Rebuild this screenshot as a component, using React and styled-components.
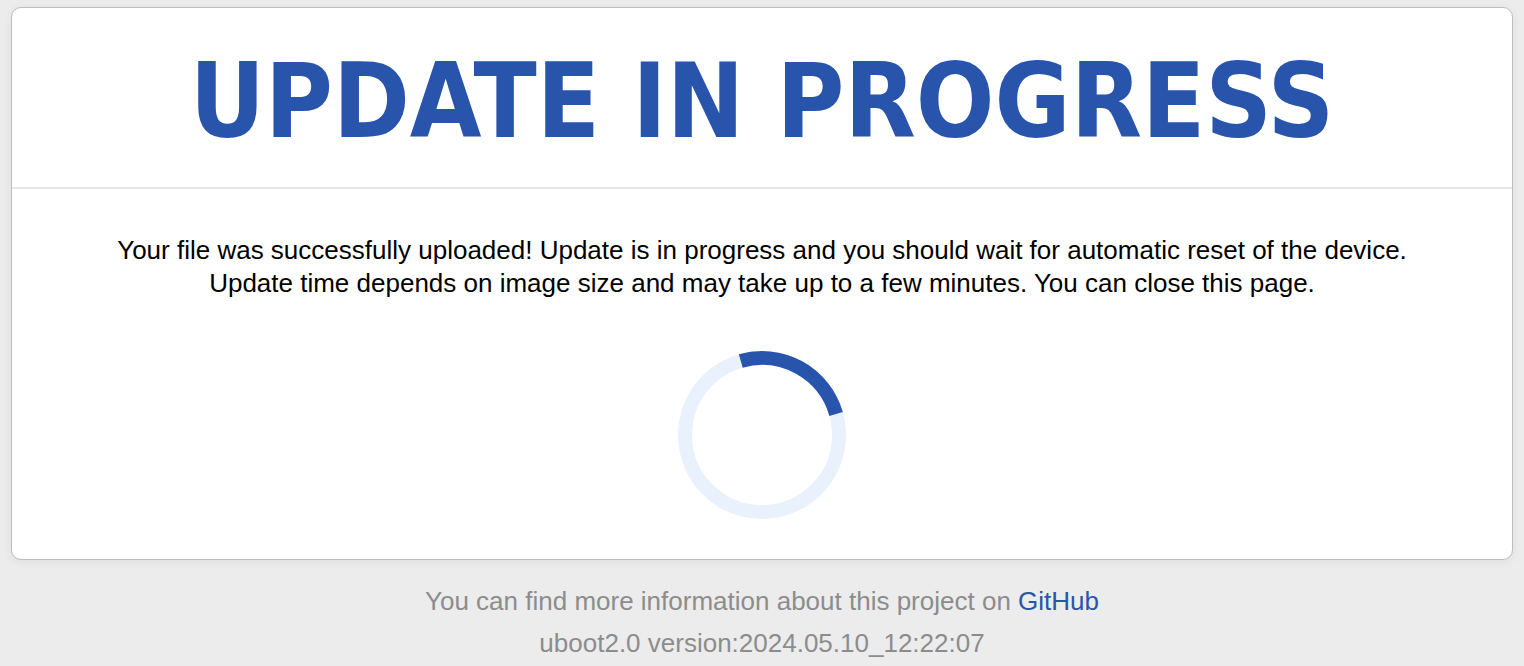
import React from 'react'
import styled, { createGlobalStyle } from 'styled-components'

const GlobalStyle = createGlobalStyle`
  html, body {
    margin: 0;
    padding: 0;
    background: #ececec;
    font-family: "Liberation Sans", Arial, sans-serif;
  }
`

const Page = styled.div`
  padding: 7px 11px 0;
`

const Card = styled.section`
  background: #fff;
  border: 1.5px solid #bdbdbd;
  border-radius: 10px;
  box-shadow: 0 2px 10px rgba(0, 0, 0, 0.06);
  overflow: hidden;
`

const Header = styled.header`
  display: flex;
  justify-content: center;
  align-items: center;
  height: 181px;
  padding-top: 8px;
  box-sizing: border-box;
  border-bottom: 2px solid #e6e6e6;
`

const Title = styled.h1`
  margin: 0;
  font-family: "DejaVu Sans Condensed", "DejaVu Sans", Verdana, sans-serif;
  font-weight: 700;
  font-size: 103px;
  color: #2855ab;
  line-height: 1;
`

const Body = styled.div`
  display: flex;
  flex-direction: column;
  align-items: center;
  padding: 45px 20px 38px;
`

const Message = styled.p`
  margin: 0;
  text-align: center;
  font-size: 26px;
  line-height: 33px;
  color: #000;
`

const Spinner = styled.svg`
  margin-top: 49px;
  width: 172px;
  height: 172px;
`

const Footer = styled.footer`
  text-align: center;
  padding-top: 20px;
  font-size: 26px;
  line-height: 42px;
  color: #8c8c8c;
`

const Link = styled.a`
  color: #2855ab;
  text-decoration: none;
`

export default function App() {
  const r = 77
  const c = 2 * Math.PI * r
  return (
    <>
      <GlobalStyle />
      <Page>
        <Card>
          <Header>
            <Title>UPDATE IN PROGRESS</Title>
          </Header>
          <Body>
            <Message>
              Your file was successfully uploaded! Update is in progress and you should wait for automatic reset of the device.
              <br />
              Update time depends on image size and may take up to a few minutes. You can close this page.
            </Message>
            <Spinner viewBox="0 0 172 172">
              <circle cx="86" cy="86" r={r} fill="none" stroke="#e9f1fd" strokeWidth="14" />
              <circle
                cx="86"
                cy="86"
                r={r}
                fill="none"
                stroke="#2855ab"
                strokeWidth="14"
                strokeDasharray={`${c * 0.25} ${c}`}
                transform="rotate(-106 86 86)"
              />
            </Spinner>
          </Body>
        </Card>
        <Footer>
          You can find more information about this project on <Link href="#">GitHub</Link>
          <br />
          uboot2.0 version:2024.05.10_12:22:07
        </Footer>
      </Page>
    </>
  )
}
